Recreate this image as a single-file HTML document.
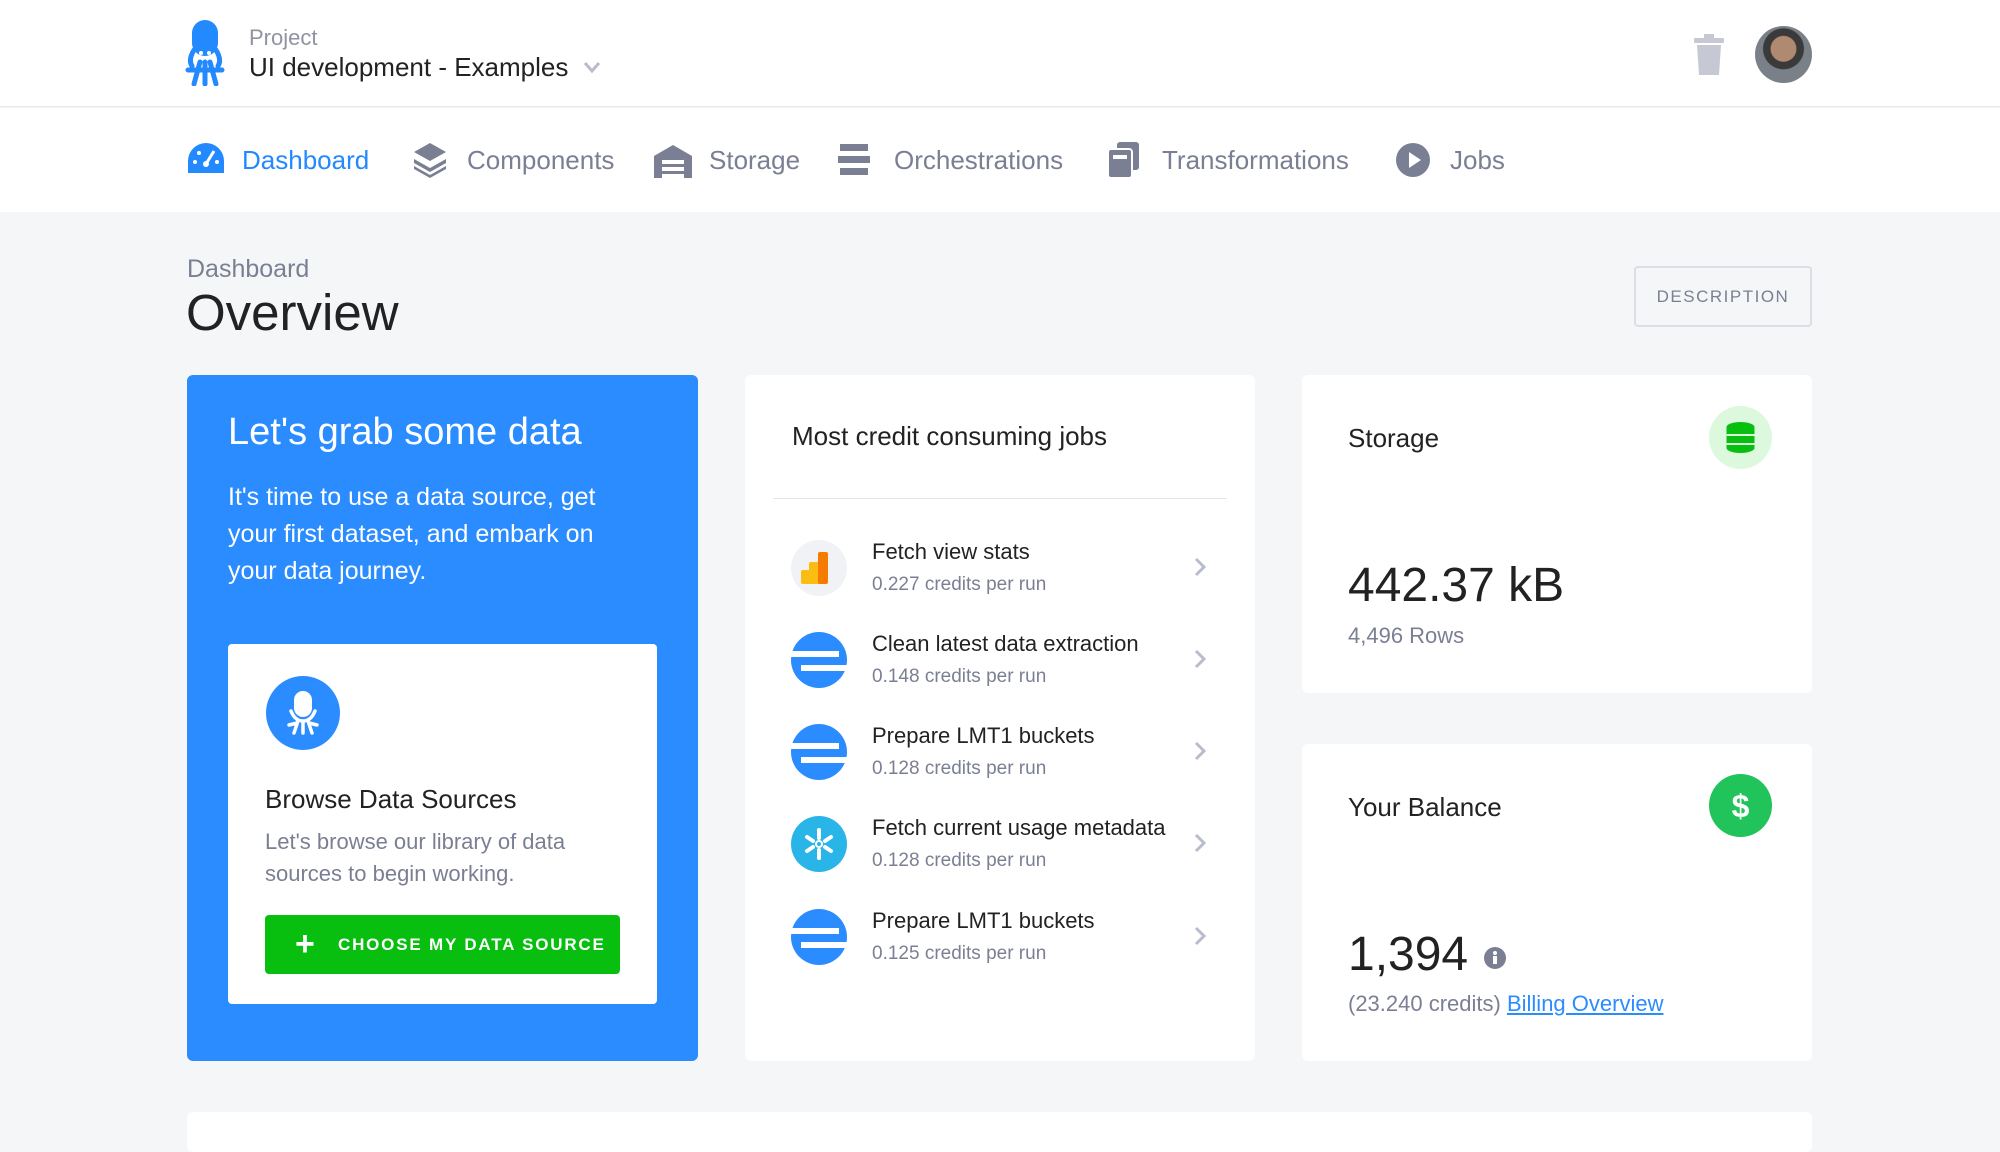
<!DOCTYPE html>
<html><head><meta charset="utf-8"><style>
*{margin:0;padding:0;box-sizing:border-box}
body{width:2000px;height:1124px;background:#f5f6f8;font-family:"Liberation Sans",sans-serif;position:relative;overflow:hidden;color:#222}
.a{position:absolute;white-space:nowrap}
.card{position:absolute;background:#fff;border-radius:6px}
.t{line-height:1}
</style></head><body>
<div class="a" style="left:0;top:0;width:2000px;height:107px;background:#fff;border-bottom:1px solid #e6e8ee"></div>
<div class="a" style="left:0;top:108px;width:2000px;height:104px;background:#fff"></div>
<!-- logo -->
<svg class="a" style="left:184px;top:20px" width="42" height="66" viewBox="0 0 42 66"><rect x="8" y="0" width="26" height="36" rx="13" fill="#2389ff"/><path d="M10 30 Q4 40 8 46 M32 30 Q38 40 34 46 M16 42 L10 64 M26 42 L32 64 M21 42 L21 64 M4 50 L38 50" stroke="#2389ff" stroke-width="5" fill="none" stroke-linecap="round"/><circle cx="17" cy="33" r="2" fill="#fff"/><circle cx="25" cy="33" r="2" fill="#fff"/></svg>
<div class="a" style="left:249px;top:25px;font-size:22px;color:#8f93a3">Project</div>
<div class="a" style="left:249px;top:52px;font-size:26px;color:#222">UI development - Examples</div>
<svg class="a" style="left:583px;top:60px" width="18" height="14"><path d="M2 3 L9 11 L16 3" stroke="#b9bccb" stroke-width="3" fill="none"/></svg>
<!-- trash -->
<svg class="a" style="left:1692px;top:34px" width="34" height="42" viewBox="0 0 34 42"><rect x="2" y="4" width="30" height="5" rx="1" fill="#c6c8d3"/><rect x="12" y="0" width="10" height="5" fill="#c6c8d3"/><path d="M5 11 H29 L27 41 H7 Z" fill="#c6c8d3"/></svg>
<div class="a" style="left:1755px;top:26px;width:57px;height:57px;border-radius:50%;background:radial-gradient(circle at 50% 40%,#b08a70 0 28%,#3a3a3a 30% 45%,#7a8088 47%)"></div>
<!-- nav -->
<div class="a" style="top:142px;left:0;font-size:26px;color:#7b7f93">
<svg class="a" style="left:187px;top:0" width="38" height="32" viewBox="0 0 38 32"><path d="M19 1 A18 18 0 0 0 1 19 V31 H37 V19 A18 18 0 0 0 19 1Z" fill="#2389ff"/><circle cx="19" cy="22" r="3" fill="#fff"/><path d="M19 22 L27 9" stroke="#fff" stroke-width="3"/><circle cx="8" cy="20" r="2" fill="#fff"/><circle cx="12" cy="11" r="2" fill="#fff"/><circle cx="30" cy="20" r="2" fill="#fff"/></svg>
<span class="a" style="left:242px;top:3px;color:#2389ff">Dashboard</span>
<svg class="a" style="left:412px;top:0" width="36" height="36" viewBox="0 0 36 36"><path d="M18 1 L34 10 L18 19 L2 10Z" fill="#7b7f93"/><path d="M2 17 L18 26 L34 17 L34 21 L18 30 L2 21Z" fill="#7b7f93"/><path d="M2 24 L18 33 L34 24 L34 27 L18 36 L2 27Z" fill="#7b7f93"/></svg>
<span class="a" style="left:467px;top:3px">Components</span>
<svg class="a" style="left:653px;top:2px" width="40" height="34" viewBox="0 0 40 34"><path d="M1 12 L20 1 L39 12 V34 H1Z" fill="#7b7f93"/><rect x="9" y="16" width="22" height="4" fill="#fff"/><rect x="9" y="23" width="22" height="4" fill="#fff"/><rect x="9" y="30" width="22" height="4" fill="#fff"/></svg>
<span class="a" style="left:709px;top:3px">Storage</span>
<svg class="a" style="left:838px;top:2px" width="34" height="32"><rect x="2" y="0" width="28" height="7" fill="#7b7f93"/><rect x="0" y="12" width="32" height="7" fill="#7b7f93"/><rect x="2" y="24" width="28" height="7" fill="#7b7f93"/></svg>
<span class="a" style="left:894px;top:3px">Orchestrations</span>
<svg class="a" style="left:1107px;top:0" width="34" height="36"><rect x="10" y="0" width="22" height="28" rx="3" fill="#7b7f93"/><rect x="1" y="7" width="24" height="29" rx="3" fill="#7b7f93" stroke="#fff" stroke-width="2"/><rect x="6" y="13" width="14" height="4" fill="#fff"/></svg>
<span class="a" style="left:1162px;top:3px">Transformations</span>
<svg class="a" style="left:1395px;top:0" width="36" height="36"><circle cx="18" cy="18" r="17" fill="#7b7f93"/><path d="M14 10 L26 18 L14 26Z" fill="#fff"/></svg>
<span class="a" style="left:1450px;top:3px">Jobs</span>
</div>
<!-- heading -->
<div class="a" style="left:187px;top:255px;font-size:25px;color:#7b7f93">Dashboard</div>
<div class="a" style="left:186px;top:283px;font-size:51px;color:#222">Overview</div>
<div class="a" style="left:1634px;top:266px;width:178px;height:61px;border:2px solid #dcdee5;border-radius:4px;text-align:center;line-height:57px;font-size:17px;letter-spacing:1.5px;color:#7b7f93">DESCRIPTION</div>
<!-- card1 -->
<div class="card" style="left:187px;top:375px;width:511px;height:686px;background:#2a8cff"></div>
<div class="a" style="left:228px;top:411px;font-size:38px;color:#fff">Let's grab some data</div>
<div class="a" style="left:228px;top:479px;font-size:25px;line-height:37px;color:#fff;white-space:normal;width:420px">It's time to use a data source, get your first dataset, and embark on your data journey.</div>
<div class="card" style="left:228px;top:644px;width:429px;height:360px;border-radius:4px"></div>
<svg class="a" style="left:265px;top:675px" width="76" height="76" viewBox="0 0 76 76"><circle cx="38" cy="38" r="37" fill="#2a8cff"/><rect x="29" y="16" width="18" height="26" rx="9" fill="#fff"/><path d="M26 36 Q30 46 38 46 Q46 46 50 36 M33 46 L29 58 M38 46 L38 58 M43 46 L47 58 M24 50 L32 48 M52 50 L44 48" stroke="#fff" stroke-width="3.5" fill="none" stroke-linecap="round"/></svg>
<div class="a" style="left:265px;top:784px;font-size:26px;color:#222">Browse Data Sources</div>
<div class="a" style="left:265px;top:826px;font-size:22px;line-height:32px;color:#7b7f93">Let's browse our library of data<br>sources to begin working.</div>
<div class="a" style="left:265px;top:915px;width:355px;height:59px;background:#08bf10;border-radius:4px"></div>
<div class="a" style="left:295px;top:930px;font-size:34px;line-height:28px;color:#fff;font-weight:bold">+</div>
<div class="a" style="left:338px;top:935px;font-size:17px;font-weight:bold;letter-spacing:1.8px;color:#fff">CHOOSE MY DATA SOURCE</div>
<!-- card2 -->
<div class="card" style="left:745px;top:375px;width:510px;height:686px"></div>
<div class="a" style="left:792px;top:421px;font-size:26px;color:#222">Most credit consuming jobs</div>
<div class="a" style="left:773px;top:498px;width:454px;height:1px;background:#e3e5ea"></div>
<svg width="0" height="0" style="position:absolute"><defs><g id="s"><circle cx="28" cy="28" r="28" fill="#2a8cff"/><rect x="0" y="19" width="48" height="6" fill="#fff"/><rect x="10" y="33" width="46" height="6" fill="#fff"/></g></defs></svg>
<svg class="a" style="left:791px;top:540px" width="56" height="56"><circle cx="28" cy="28" r="28" fill="#f1f2f5"/><rect x="10" y="30" width="14" height="14" rx="2" fill="#fbbd12"/><rect x="18" y="22" width="14" height="22" rx="2" fill="#fbbd12"/><rect x="27" y="12" width="10" height="32" rx="2" fill="#f57c00"/></svg>
<svg class="a" style="left:791px;top:632px" width="56" height="56"><use href="#s"/></svg>
<svg class="a" style="left:791px;top:724px" width="56" height="56"><use href="#s"/></svg>
<svg class="a" style="left:791px;top:816px" width="56" height="56"><circle cx="28" cy="28" r="28" fill="#29b5e8"/><g stroke="#fff" stroke-width="4" stroke-linecap="round"><path d="M28 14 V22 M28 34 V42 M16 21 L22 25 M34 31 L40 35 M16 35 L22 31 M34 25 L40 21"/></g><circle cx="28" cy="28" r="3" fill="none" stroke="#fff" stroke-width="2"/></svg>
<svg class="a" style="left:791px;top:909px" width="56" height="56"><use href="#s"/></svg>
<div class="a" style="left:872px;top:539px;font-size:22px;color:#222;line-height:26px">Fetch view stats<br><span style="font-size:19px;color:#7b7f93;line-height:40px">0.227 credits per run</span></div>
<div class="a" style="left:872px;top:631px;font-size:22px;color:#222;line-height:26px">Clean latest data extraction<br><span style="font-size:19px;color:#7b7f93;line-height:40px">0.148 credits per run</span></div>
<div class="a" style="left:872px;top:723px;font-size:22px;color:#222;line-height:26px">Prepare LMT1 buckets<br><span style="font-size:19px;color:#7b7f93;line-height:40px">0.128 credits per run</span></div>
<div class="a" style="left:872px;top:815px;font-size:22px;color:#222;line-height:26px">Fetch current usage metadata<br><span style="font-size:19px;color:#7b7f93;line-height:40px">0.128 credits per run</span></div>
<div class="a" style="left:872px;top:908px;font-size:22px;color:#222;line-height:26px">Prepare LMT1 buckets<br><span style="font-size:19px;color:#7b7f93;line-height:40px">0.125 credits per run</span></div>
<svg class="a" style="left:1193px;top:557px" width="16" height="400"><g stroke="#b9bccb" stroke-width="3" fill="none"><path d="M3 2 L11 10 L3 18"/><path d="M3 94 L11 102 L3 110"/><path d="M3 186 L11 194 L3 202"/><path d="M3 278 L11 286 L3 294"/><path d="M3 371 L11 379 L3 387"/></g></svg>
<!-- storage -->
<div class="card" style="left:1302px;top:375px;width:510px;height:318px"></div>
<div class="a" style="left:1348px;top:423px;font-size:26px;color:#222">Storage</div>
<svg class="a" style="left:1709px;top:406px" width="63" height="63"><circle cx="31.5" cy="31.5" r="31.5" fill="#dcf9de"/><g fill="#08bf10"><ellipse cx="31.5" cy="21" rx="14" ry="5"/><rect x="17.5" y="21" width="28" height="7"/><rect x="17.5" y="30" width="28" height="7"/><path d="M17.5 39 H45.5 V42 A14 5 0 0 1 17.5 42Z"/></g></svg>
<div class="a" style="left:1348px;top:558px;font-size:48px;color:#222">442.37 kB</div>
<div class="a" style="left:1348px;top:623px;font-size:22px;color:#7b7f93">4,496 Rows</div>
<!-- balance -->
<div class="card" style="left:1302px;top:744px;width:510px;height:317px"></div>
<div class="a" style="left:1348px;top:792px;font-size:26px;color:#222">Your Balance</div>
<svg class="a" style="left:1709px;top:774px" width="63" height="63"><circle cx="31.5" cy="31.5" r="31.5" fill="#21c45a"/><text x="31.5" y="43" text-anchor="middle" font-family="Liberation Sans" font-weight="bold" font-size="32" fill="#fff">$</text></svg>
<div class="a" style="left:1348px;top:927px;font-size:48px;color:#222">1,394</div>
<svg class="a" style="left:1484px;top:947px" width="22" height="22"><circle cx="11" cy="11" r="11" fill="#7b7f93"/><rect x="9" y="9" width="4" height="8" fill="#fff"/><circle cx="11" cy="6" r="2" fill="#fff"/></svg>
<div class="a" style="left:1348px;top:991px;font-size:22px;color:#7b7f93">(23.240 credits) <span style="color:#2a8cff;text-decoration:underline">Billing Overview</span></div>
<div class="card" style="left:187px;top:1112px;width:1625px;height:40px"></div>
</body></html>
